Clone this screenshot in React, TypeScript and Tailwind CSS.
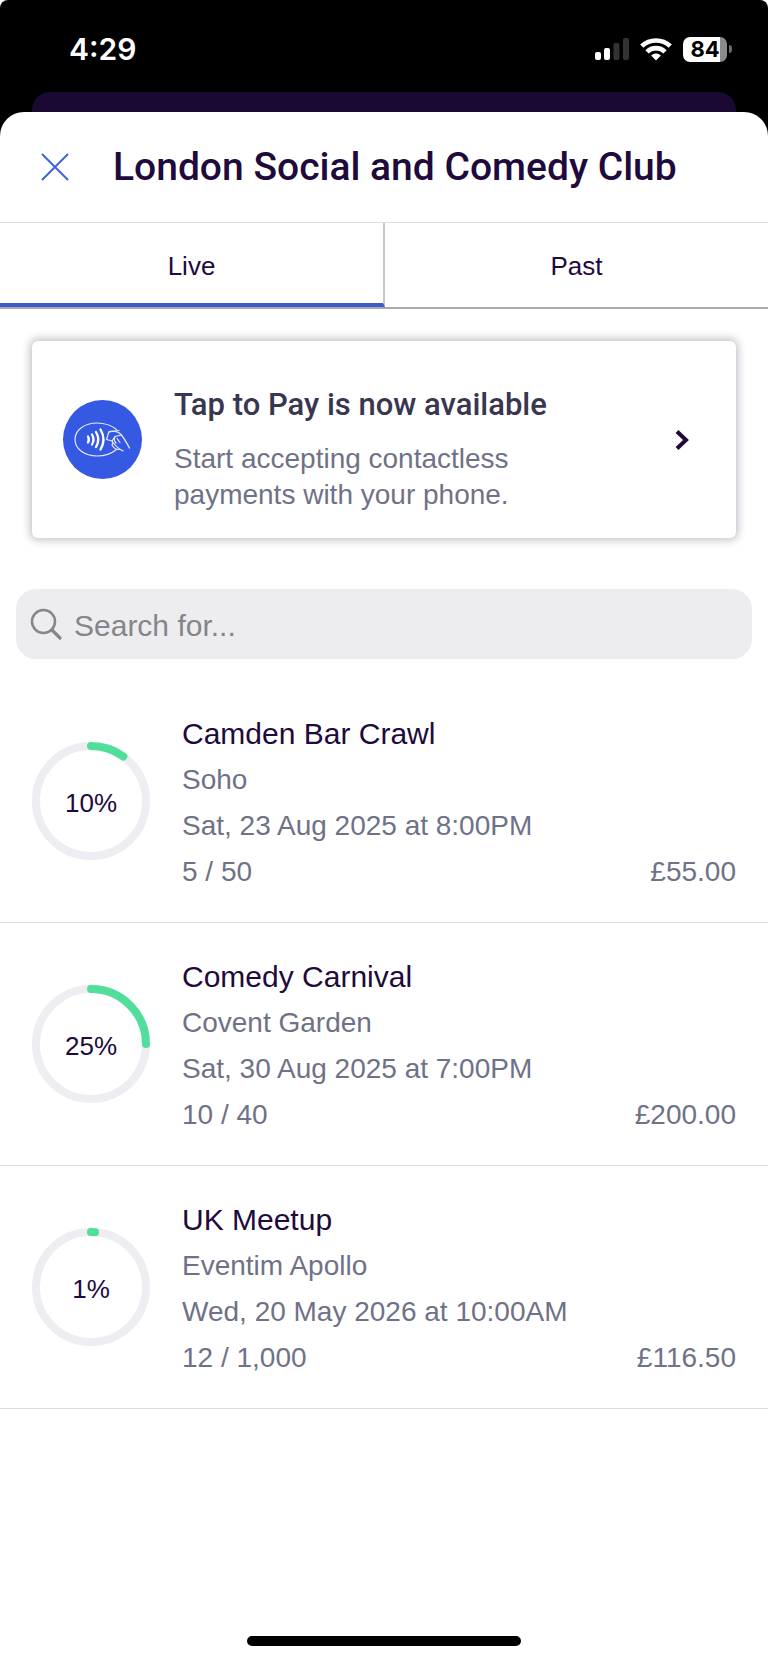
import React, { useState } from 'react';

const events = [
  { id: 1, name: 'Camden Bar Crawl', venue: 'Soho', date: 'Sat, 23 Aug 2025 at 8:00PM', sold: 5, capacity: 50, total: '£55.00' },
  { id: 2, name: 'Comedy Carnival', venue: 'Covent Garden', date: 'Sat, 30 Aug 2025 at 7:00PM', sold: 10, capacity: 40, total: '£200.00' },
  { id: 3, name: 'UK Meetup', venue: 'Eventim Apollo', date: 'Wed, 20 May 2026 at 10:00AM', sold: 12, capacity: 1000, total: '£116.50' },
];

const StatusBar = () => (
  <div className="flex h-[92px] items-center justify-between pt-1.5 pr-9 pl-[69px]">
    <span className="font-['Inter',sans-serif] text-[30px] leading-9 font-semibold text-white">4:29</span>
    <div className="flex items-center gap-[11px]">
      <svg width="34" height="24" viewBox="0 0 34 24" aria-hidden="true">
        <rect x="0" y="15" width="6" height="8" rx="2" fill="#fff" />
        <rect x="9" y="11" width="6" height="12" rx="2" fill="#fff" />
        <rect x="18.5" y="6" width="6" height="17" rx="2" fill="#333" />
        <rect x="28" y="1" width="6" height="22" rx="2" fill="#333" />
      </svg>
      <svg width="32" height="24" viewBox="0 0 32 24" aria-hidden="true">
        <g fill="none" stroke="#fff" strokeWidth="4.6">
          <path d="M1.8 9.2a20.4 20.4 0 0 1 28.4 0" />
          <path d="M7 14.8a12.9 12.9 0 0 1 18 0" />
        </g>
        <path d="M16 23.5l-4.900-5a7 7 0 0 1 9.800 0z" fill="#fff" />
      </svg>
      <div className="flex items-center gap-[2px]">
        <div className="flex h-[25px] w-[44px] items-center justify-center rounded-[7px] bg-linear-to-r from-white from-84% to-[#8b8b8b] to-84% font-['Inter',sans-serif] text-[22px] leading-6 font-bold text-black">
          84
        </div>
        <div className="h-2 w-[3px] rounded-r-full bg-[#6b6b6b]" />
      </div>
    </div>
  </div>
);

const TapToPayIcon = () => (
  <svg width="79" height="79" viewBox="0 0 79 79" className="shrink-0" aria-hidden="true">
    <circle cx="39.5" cy="39.5" r="39.5" fill="#3659e3" />
    <g fill="none" stroke="#e4ebff" strokeWidth="1.2" strokeLinecap="round" strokeLinejoin="round">
      <path d="M53.5 29.5C48 25 41 23 34 23C21.5 23 12 30 12 39.5S21.5 56 34 56c7.5 0 14.500-2.300 19.500-6.500" />
      <path d="M66.500 48C64 43.500 61 38 58 34.500C55 31.500 51 30.500 46 31.500L43.500 39.500L49 41L52 36.500L58 35" />
      <path d="M46 32l10-1.500M49 41c2.500 3.500 5 6.500 8 8.200L60 51M52 37c-1.500 2.500-.5 4.500 1 6M50 42.500l-1 2.500c1.500 3 4 4.500 7 4.500M54 38.500l3 4" />
    </g>
    <g fill="none" stroke="#fff" strokeWidth="2.3" strokeLinecap="round">
      <path d="M25 36.500q1.800 3 0 6" />
      <path d="M29 34.500q3 5 0 10" />
      <path d="M33 32q4.500 7.500 0 15" />
      <path d="M37.500 29.500q6 10 0 20" />
    </g>
  </svg>
);

const ProgressRing = ({ percent }: { percent: number }) => (
  <div className="grid size-[118px] shrink-0 place-items-center">
    <svg viewBox="0 0 118 118" className="col-start-1 row-start-1 size-full" aria-hidden="true">
      <circle cx="59" cy="59" r="55" fill="none" stroke="#eeedf2" strokeWidth="8" />
      <circle
        cx="59"
        cy="59"
        r="55"
        fill="none"
        stroke="#50de9b"
        strokeWidth="8"
        strokeLinecap="round"
        pathLength="100"
        strokeDasharray={`${percent} 100`}
        transform="rotate(-90 59 59)"
      />
    </svg>
    <span className="col-start-1 row-start-1 pt-[3px] text-[26px] leading-8 text-[#1e0a3c]">{Math.round(percent)}%</span>
  </div>
);

const EventRow = ({ event }) => (
  <li className="flex items-center gap-8 border-b border-[#dcdcde] px-8 py-[27px] text-[28px] leading-[46px] text-[#6f7287]">
    <ProgressRing percent={(event.sold / event.capacity) * 100} />
    <div className="min-w-0 flex-1 pt-1">
      <h2 className="text-[30px] leading-[46px] text-[#1e0a3c]">{event.name}</h2>
      <p>{event.venue}</p>
      <p>{event.date}</p>
      <div className="flex justify-between">
        <span>{`${event.sold} / ${event.capacity.toLocaleString('en-GB')}`}</span>
        <span>{event.total}</span>
      </div>
    </div>
  </li>
);

export default function App() {
  const [tab, setTab] = useState('live');
  const [query, setQuery] = useState('');

  const visible = events.filter((e) => e.name.toLowerCase().includes(query.toLowerCase()));

  return (
    <div className="flex min-h-screen flex-col bg-white font-['Liberation_Sans',Arial,sans-serif]">
      <div className="flex flex-1 flex-col rounded-t-lg bg-black">
        <StatusBar />
        <div className="mx-8 h-5 rounded-t-[18px] bg-[#1a0a33]" />

        <main className="flex flex-1 flex-col rounded-t-[24px] bg-white">
          <header className="flex h-[111px] items-center gap-[44px] border-b border-[#dcdcde] pl-[41px]">
            <button aria-label="Close">
              <svg width="28" height="28" viewBox="0 0 28 28" stroke="#3d64d8" strokeWidth="2" aria-hidden="true">
                <path d="M1 1L27 27M27 1L1 27" />
              </svg>
            </button>
            <h1 className="font-['Roboto',sans-serif] text-[39px] leading-[48px] font-medium whitespace-nowrap text-[#1e0a3c]">
              London Social and Comedy Club
            </h1>
          </header>

          <div role="tablist" className="flex h-[86px] border-b-2 border-[#aaa9ae] text-[26px] text-[#1e0a3c]">
            <button
              role="tab"
              aria-selected={tab === 'live'}
              onClick={() => setTab('live')}
              className={`flex-1 border-r-2 border-b-4 border-r-[#c9c9cc] pt-1.5 ${tab === 'live' ? 'border-b-[#3d5cc9]' : 'border-b-transparent'}`}
            >
              Live
            </button>
            <button
              role="tab"
              aria-selected={tab === 'past'}
              onClick={() => setTab('past')}
              className={`flex-1 border-b-4 pt-1.5 ${tab === 'past' ? 'border-b-[#3d5cc9]' : 'border-b-transparent'}`}
            >
              Past
            </button>
          </div>

          <button className="mx-8 mt-8 flex h-[197px] items-center rounded-[6px] bg-white pr-[46px] pl-[31px] text-left shadow-[0_0_8px_2px_rgba(57,54,79,0.32)]">
            <TapToPayIcon />
            <span className="ml-8 flex-1 pt-[18px]">
              <span className="block font-['Roboto',sans-serif] text-[31px] leading-10 font-medium text-[#39364f]">
                Tap to Pay is now available
              </span>
              <span className="mt-4 block max-w-[400px] text-[28px] leading-9 text-[#6f7287]">
                Start accepting contactless payments with your phone.
              </span>
            </span>
            <svg width="16" height="22" viewBox="0 0 16 22" fill="none" stroke="#1e0a3c" strokeWidth="4" aria-hidden="true">
              <path d="M3 2.500L12 11L3 19.500" />
            </svg>
          </button>

          <label className="mx-4 mt-[51px] flex h-[70px] items-center gap-[11px] rounded-[20px] bg-[#ededef] px-[14px]">
            <svg width="33" height="33" viewBox="0 0 33 33" fill="none" stroke="#85858a" strokeWidth="2.5" strokeLinecap="round" aria-hidden="true">
              <circle cx="13.5" cy="13.5" r="11.5" />
              <path d="M22 22L30 30" strokeWidth="3.2" />
            </svg>
            <input
              type="text"
              aria-label="Search events"
              placeholder="Search for..."
              value={query}
              onChange={(e) => setQuery(e.target.value)}
              className="min-w-0 flex-1 bg-transparent pt-[3px] text-[30px] leading-10 text-[#1e0a3c] outline-none placeholder:text-[#85858a]"
            />
          </label>

          <ul className="mt-[21px]">
            {visible.map((event) => (
              <EventRow key={event.id} event={event} />
            ))}
          </ul>

          <div className="mx-auto mt-auto mb-4 h-[10px] w-[274px] rounded-full bg-black" />
        </main>
      </div>
    </div>
  );
}
